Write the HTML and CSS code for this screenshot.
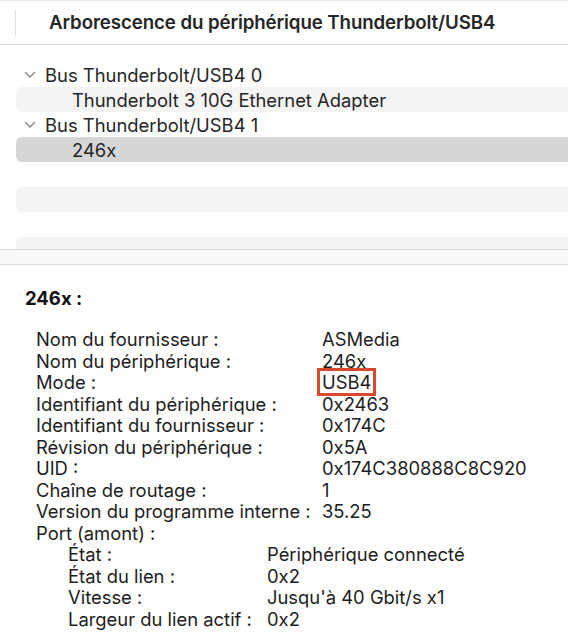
FILE: index.html
```html
<!DOCTYPE html>
<html lang="fr">
<head>
  <meta charset="UTF-8">
  <title>Arborescence du périphérique Thunderbolt/USB4</title>
  <link rel="stylesheet" href="styles.css">
</head>
<body>
  <div class="window">
    <div class="header">
      <span class="header-sep"></span>
      <h1>Arborescence du périphérique Thunderbolt/USB4</h1>
    </div>

    <div class="tree">
      <div class="row">
        <svg class="chevron" viewBox="0 0 12 8"><path d="M1.5 1.5 L6 6 L10.5 1.5"/></svg>
        <span class="label">Bus Thunderbolt/USB4 0</span>
      </div>
      <div class="row stripe child">Thunderbolt 3 10G Ethernet Adapter</div>
      <div class="row">
        <svg class="chevron" viewBox="0 0 12 8"><path d="M1.5 1.5 L6 6 L10.5 1.5"/></svg>
        <span class="label">Bus Thunderbolt/USB4 1</span>
      </div>
      <div class="row selected child">246x</div>
      <div class="row"></div>
      <div class="row stripe"></div>
      <div class="row"></div>
      <div class="row stripe"></div>
    </div>

    <div class="splitter"></div>

    <div class="details">
      <h2>246x :</h2>
      <div class="props">
        <span>Nom du fournisseur :</span><span>ASMedia</span>
        <span>Nom du périphérique :</span><span>246x</span>
        <span>Mode :</span><span><em class="mark">USB4</em></span>
        <span>Identifiant du périphérique :</span><span>0x2463</span>
        <span>Identifiant du fournisseur :</span><span>0x174C</span>
        <span>Révision du périphérique :</span><span>0x5A</span>
        <span>UID :</span><span>0x174C380888C8C920</span>
        <span>Chaîne de routage :</span><span>1</span>
        <span>Version du programme interne :</span><span>35.25</span>
        <span class="full">Port (amont) :</span>
      </div>
      <div class="props nested">
        <span>État :</span><span>Périphérique connecté</span>
        <span>État du lien :</span><span>0x2</span>
        <span>Vitesse :</span><span>Jusqu'à 40 Gbit/s x1</span>
        <span>Largeur du lien actif :</span><span>0x2</span>
      </div>
    </div>
  </div>
</body>
</html>
```

FILE: styles.css
```css
* {
  box-sizing: border-box;
  margin: 0;
  padding: 0;
}

body {
  background: #ffffff;
  font-family: Inter, "Liberation Sans", sans-serif;
  color: #262626;
  overflow: hidden;
}

.window {
  width: 568px;
  height: 640px;
  border-top: 1px solid #e6e6e6;
}

.header {
  height: 44px;
  display: flex;
  align-items: center;
  border-bottom: 1px solid #dcdcdc;
}

.header-sep {
  width: 1px;
  height: 26px;
  margin-left: 15px;
  background: #dedede;
}

h1 {
  margin-left: 33px;
  font-size: 18.7px;
  font-weight: 600;
  letter-spacing: -0.1px;
  color: #262626;
}

.tree {
  padding-top: 17px;
  height: 204px;
  overflow: hidden;
}

.row {
  height: 25px;
  margin-left: 16px;
  display: flex;
  align-items: center;
  font-size: 18.4px;
  border-radius: 6px 0 0 6px;
}

.row.stripe {
  background: #f4f4f4;
}

.row.selected {
  background: #d6d6d6;
}

.row.child {
  padding-left: 56px;
}

.chevron {
  width: 12px;
  height: 8px;
  margin-left: 8px;
  margin-right: 9px;
  fill: none;
  stroke: #8a8a8a;
  stroke-width: 1.5;
  stroke-linecap: round;
  stroke-linejoin: round;
}

.splitter {
  height: 16px;
  background: #f8f8f8;
  border-top: 1px solid #d9d9d9;
  border-bottom: 1px solid #d9d9d9;
}

.details {
  padding: 22px 0 0 25px;
}

h2 {
  font-size: 18.5px;
  font-weight: 700;
  color: #111;
  margin-bottom: 20px;
}

.props {
  display: grid;
  grid-template-columns: 286px auto;
  padding-left: 11px;
  font-size: 18.4px;
  line-height: 21.5px;
  color: #1e1e1e;
}

.props .full {
  grid-column: 1 / -1;
}

.props.nested {
  padding-left: 43px;
  grid-template-columns: 199px auto;
}

.mark {
  font-style: normal;
  outline: 3px solid #d84a2b;
  outline-offset: 0;
  padding: 0 2px;
  margin-left: -2px;
}
```
